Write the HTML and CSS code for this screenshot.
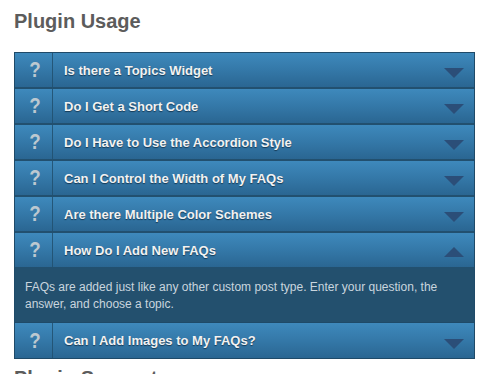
FILE: index.html
```html
<!DOCTYPE html>
<html>
<head>
<meta charset="utf-8">
<link rel="stylesheet" href="styles.css">
</head>
<body>
<div class="page">
  <h2 class="title">Plugin Usage</h2>
  <div class="faq">
    <div class="row"><div class="qmark">?</div><div class="q">Is there a Topics Widget</div><div class="tri down"></div></div>
    <div class="row"><div class="qmark">?</div><div class="q">Do I Get a Short Code</div><div class="tri down"></div></div>
    <div class="row"><div class="qmark">?</div><div class="q">Do I Have to Use the Accordion Style</div><div class="tri down"></div></div>
    <div class="row"><div class="qmark">?</div><div class="q">Can I Control the Width of My FAQs</div><div class="tri down"></div></div>
    <div class="row"><div class="qmark">?</div><div class="q">Are there Multiple Color Schemes</div><div class="tri down"></div></div>
    <div class="row"><div class="qmark">?</div><div class="q">How Do I Add New FAQs</div><div class="tri up"></div></div>
    <div class="answer">FAQs are added just like any other custom post type. Enter your question, the answer, and choose a topic.</div>
    <div class="row last"><div class="qmark">?</div><div class="q">Can I Add Images to My FAQs?</div><div class="tri down"></div></div>
  </div>
  <h2 class="title next">Plugin Support</h2>
</div>
</body>
</html>
```
FILE: styles.css
```css
html, body { margin: 0; padding: 0; background: #fff; }
.page { padding: 0 9px 0 14px; font-family: "Liberation Sans", Arial, sans-serif; }
.title { margin: 10px 0 19px; font-size: 20px; line-height: 23px; font-weight: bold; color: #5c5c5c; }
.title.next { margin-top: 8px; }
.faq { width: 459px; border: 1px solid #1f4a68; border-bottom: none; }
.row { display: flex; align-items: stretch; height: 34px; border-bottom: 2px solid #22506f;
  background: linear-gradient(to bottom, #3e89bc 0%, #3478a8 50%, #2a6692 100%); }
.row.last { border-bottom: 1px solid #1f4a68; height: 35px; }
.qmark { width: 40px; flex: none; border-right: 1px solid #22506f; display: flex; align-items: center; justify-content: center;
  font-size: 22px; font-weight: bold; color: #bcc8d0; transform: scaleX(0.85); }
.q { flex: 1; display: flex; align-items: center; padding-left: 8px; font-size: 13px; font-weight: bold; color: #f2f2f2;
  text-shadow: 0 1px 1px #163a55; }
.tri { width: 0; height: 0; align-self: center; margin-right: 10px; border-left: 10px solid transparent; border-right: 10px solid transparent; }
.tri.down { border-top: 10px solid #2b4e78; margin-top: 6px; }
.tri.up { border-bottom: 10px solid #2b4e78; margin-top: 4px; }
.answer { background: #23506e; color: #c9d5de; font-size: 12px; line-height: 17px; padding: 10px 10px 9px; border-bottom: 1px solid #1f4a68; }
```
